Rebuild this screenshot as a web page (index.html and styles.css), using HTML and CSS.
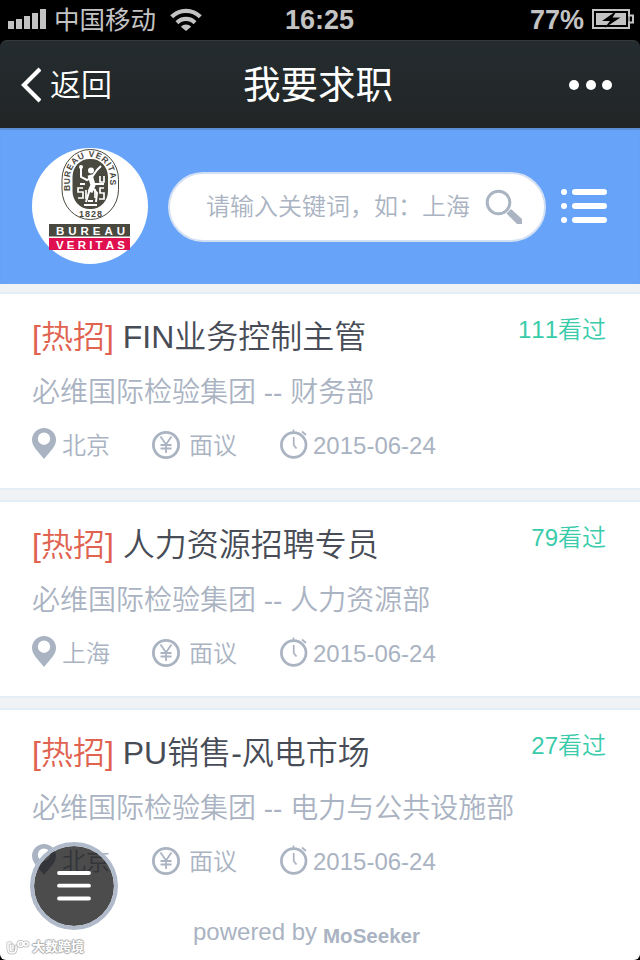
FILE: index.html
```html
<!DOCTYPE html>
<html lang="zh-CN">

<head>
    <meta charset="UTF-8">
    <meta name="viewport" content="width=device-width, initial-scale=1.0">
    <title>我要求职</title>
    <link rel="stylesheet" href="styles.css">
</head>

<body>
    <!-- shared icons -->
    <svg class="icon-defs">
        <symbol id="icon-pin" viewBox="0 0 24 31">
            <path fill-rule="evenodd" d="M12 0a12 12 0 0 1 12 12c0 4-2 6.500-4 9.500L12 31 4 21.500C2 18.500 0 16 0 12A12 12 0 0 1 12 0zm0 4.500a6.200 6.200 0 1 0 0 12.400 6.200 6.200 0 0 0 0-12.400z" fill="currentColor" />
        </symbol>
        <symbol id="icon-yen" viewBox="0 0 28 28">
            <g fill="none" stroke="currentColor">
                <circle cx="14" cy="14" r="12.600" stroke-width="2.800" />
                <path d="M8.500 5.500L14 13.500l5.500-8M14 13v9M8.500 14h11M8.500 17.500h11" stroke-width="1.800" />
            </g>
        </symbol>
        <symbol id="icon-clock" viewBox="0 0 28 30">
            <g fill="none" stroke="currentColor">
                <circle cx="13.700" cy="16" r="12.300" stroke-width="2.700" />
                <path d="M13.500 0.500v3M22 2.500l4 3.500M13.700 8v8l2.800 3.500" stroke-width="1.700" />
            </g>
        </symbol>
    </svg>

    <div class="status-bar">
        <div class="status-left">
            <svg class="signal" viewBox="0 0 38 20">
                <path d="M0 12h6v8H0zM8 10h6v10H8zM16 7h6v13h-6zM24 4h6v16h-6zM32 0h6v20h-6z" fill="#c3c3c3" />
            </svg>
            <span class="carrier">中国移动</span>
            <svg class="wifi" viewBox="0 0 32 23">
                <g fill="none" stroke="#c3c3c3" stroke-width="4.200">
                    <path d="M1.700 8.800a20 20 0 0 1 28.600 0" />
                    <path d="M7 14.700a12.700 12.700 0 0 1 18 0" />
                </g>
                <path d="M10.800 18.700a7.500 7.500 0 0 1 10.400 0L16 23z" fill="#c3c3c3" />
            </svg>
        </div>
        <div class="status-time">16:25</div>
        <div class="status-right">
            <span>77%</span>
            <svg class="battery" viewBox="0 0 42 20">
                <path d="M1 1h36v5.500h4v7h-4V19H1z" fill="none" stroke="#c3c3c3" stroke-width="2" />
                <path d="M37 6v8" stroke="#c3c3c3" stroke-width="1.500" />
                <path d="M4 4h30v12H4z" fill="#c3c3c3" />
                <path d="M25 1.500L10 12h8l-5.500 7L28.500 8.500h-8z" fill="#000" />
            </svg>
        </div>
    </div>

    <div class="nav-bar">
        <div class="back">
            <svg class="back-arrow" viewBox="0 0 20 36">
                <path d="M19 2L3 18l16 16" fill="none" stroke="#fff" stroke-width="4.200" />
            </svg>
            <span>返回</span>
        </div>
        <h1>我要求职</h1>
        <div class="more"><i></i><i></i><i></i></div>
    </div>

    <div class="search-header">
        <svg class="logo" viewBox="0 0 116 116">
            <defs>
                <path id="seal-top" d="M38 43V31a20.200 22 0 0 1 40.400 0v12" />
            </defs>
            <circle cx="58" cy="58" r="58" fill="#fff" />
            <rect x="30" y="1.500" width="56.500" height="70" rx="28.200" ry="30" fill="#fff" stroke="#4a493f" />
            <rect x="40.500" y="11" width="35.500" height="50" rx="17" ry="18" fill="#4a493f" />
            <text class="seal-text"><textPath href="#seal-top" textLength="84">BUREAU VERITAS</textPath></text>
            <text class="seal-text seal-year" x="47" y="69" textLength="23">1828</text>
            <!-- figure inside the seal -->
            <g fill="none" stroke="#fff">
                <path d="M49 20v9l6 3 5-3 5-7 4-4M59 29l2 9-4 6-3 10M60 39l5 6-1 9M48 36h5M62 36h10M52 57h13M56 53h5" stroke-width="2" />
                <path d="M58 27l3 10-3 7" stroke-width="5" />
                <path d="M51 40h-5v4h5v6h-5M54 42v9M63 41v9M72 40h-4v5h4v6h-5M68 28v6h4v-6" stroke-width="1.700" />
            </g>
            <circle cx="59" cy="22.500" r="3" fill="#fff" />
            <circle cx="49" cy="19" r="2" fill="#fff" />
            <path d="M17 76h81v12.500H17z" fill="#4a493f" />
            <path d="M17 90h81v12H17z" fill="#df0f50" />
            <text class="logo-text" x="24" y="86.500" textLength="69">BUREAU</text>
            <text class="logo-text" x="24" y="100.500" textLength="69">VERITAS</text>
        </svg>
        <div class="search-box">
            <span>请输入关键词，如：上海</span>
            <svg class="search-icon" viewBox="0 0 38 36">
                <circle cx="13.500" cy="13.500" r="11.300" fill="none" stroke="#aab4c3" stroke-width="3" />
                <path d="M21.500 24.500l4.500-4.500 11 10v5h-5z" fill="#aab4c3" />
            </svg>
        </div>
        <svg class="list-icon" viewBox="0 0 46 36">
            <g stroke="#fff" stroke-width="6" stroke-linecap="round">
                <path d="M3 4h.1M3 18h.1M3 32h.1M14 4h29M14 18h29M14 32h29" />
            </g>
        </svg>
    </div>

    <div class="job-list">
        <div class="job">
            <div class="job-head">
                <h2><em>[热招]</em> FIN业务控制主管</h2>
                <span class="views">111看过</span>
            </div>
            <p class="dept">必维国际检验集团 -- 财务部</p>
            <div class="meta">
                <span class="place"><svg class="pin"><use href="#icon-pin" /></svg>北京</span>
                <span class="pay"><svg class="yen"><use href="#icon-yen" /></svg>面议</span>
                <span class="date"><svg class="clock"><use href="#icon-clock" /></svg>2015-06-24</span>
            </div>
        </div>
        <div class="job">
            <div class="job-head">
                <h2><em>[热招]</em> 人力资源招聘专员</h2>
                <span class="views">79看过</span>
            </div>
            <p class="dept">必维国际检验集团 -- 人力资源部</p>
            <div class="meta">
                <span class="place"><svg class="pin"><use href="#icon-pin" /></svg>上海</span>
                <span class="pay"><svg class="yen"><use href="#icon-yen" /></svg>面议</span>
                <span class="date"><svg class="clock"><use href="#icon-clock" /></svg>2015-06-24</span>
            </div>
        </div>
        <div class="job">
            <div class="job-head">
                <h2><em>[热招]</em> PU销售-风电市场</h2>
                <span class="views">27看过</span>
            </div>
            <p class="dept">必维国际检验集团 -- 电力与公共设施部</p>
            <div class="meta">
                <span class="place"><svg class="pin"><use href="#icon-pin" /></svg>北京</span>
                <span class="pay"><svg class="yen"><use href="#icon-yen" /></svg>面议</span>
                <span class="date"><svg class="clock"><use href="#icon-clock" /></svg>2015-06-24</span>
            </div>
        </div>
    </div>

    <div class="footer">
        <span>powered by</span>
        <svg class="brand" viewBox="0 0 104 28">
            <text x="2" y="20.500" textLength="97" lengthAdjust="spacingAndGlyphs">MoSeeker</text>
        </svg>
    </div>

    <!-- floating menu button -->
    <div class="menu-btn">
        <svg viewBox="0 0 34 30">
            <path d="M2 2h30M2 14.700h30M2 27.500h30" stroke="#fff" stroke-width="3.800" stroke-linecap="round" />
        </svg>
    </div>

    <div class="watermark">
        <svg viewBox="0 0 24 15">
            <g fill="none" stroke-linecap="round">
                <path d="M2 3v6q0 4 4 4t4-4V6M2 3h3M7 5v4M12 4a2.500 2.500 0 1 0 5 0 2.500 2.500 0 1 0-5 0M18 4a2 2 0 1 0 4 0 2 2 0 1 0-4 0" stroke="#bbb" stroke-width="3" />
                <path d="M2 3v6q0 4 4 4t4-4V6M2 3h3M7 5v4M12 4a2.500 2.500 0 1 0 5 0 2.500 2.500 0 1 0-5 0M18 4a2 2 0 1 0 4 0 2 2 0 1 0-4 0" stroke="#fff" stroke-width="1.500" />
            </g>
        </svg>
        <span>大数跨境</span>
    </div>
</body>

</html>
```

FILE: styles.css
```css
* {
    box-sizing: border-box;
    margin: 0;
    padding: 0;
}

html {
    background-color: #000;
}

body {
    position: relative;
    width: 640px;
    height: 960px;
    overflow: hidden;
    background-color: #000;
    font-family: "Liberation Sans", "Noto Sans CJK SC", sans-serif;
    font-weight: 350;
    font-kerning: none;
    color: #aab3c2;
}

svg {
    display: block;
    flex-shrink: 0;
}

.icon-defs {
    display: none;
}

/* Status bar */
.status-bar {
    height: 40px;
    padding: 0 6px 0 8px;
    display: grid;
    grid-template-columns: 1fr auto 1fr;
    align-items: center;
    color: #c3c3c3;
    font-size: 27px;
    font-weight: bold;
    line-height: 40px;
}

.status-left,
.status-right {
    display: flex;
    align-items: center;
}

.status-time {
    margin-right: 3px;
}

.status-right {
    justify-content: flex-end;
    gap: 8px;
}

.signal {
    width: 38px;
    height: 20px;
    margin: 0 8px 2px 0;
}

.carrier {
    font-size: 25.500px;
    font-weight: normal;
}

.wifi {
    width: 32px;
    height: 23px;
    margin: 0 0 1px 14px;
}

.battery {
    width: 42px;
    height: 20px;
    margin-bottom: 2px;
}

/* Navigation bar */
.nav-bar {
    height: 88px;
    padding: 0 28px 0 21px;
    display: grid;
    grid-template-columns: 1fr auto 1fr;
    align-items: center;
    background: linear-gradient(#242c2f, #222526);
    border-top: 1px solid #34393b;
    border-radius: 7px 7px 0 0;
    color: #fff;
}

.back {
    display: flex;
    align-items: center;
    gap: 9px;
    font-size: 31px;
}

.back span {
    padding-bottom: 5px;
}

.back-arrow {
    width: 20px;
    height: 36px;
}

.nav-bar h1 {
    padding: 0 0 7px 3px;
    font-size: 37.500px;
    font-weight: normal;
}

.more {
    display: flex;
    justify-content: flex-end;
    gap: 6.500px;
}

.more i {
    width: 10px;
    height: 10px;
    border-radius: 50%;
    background-color: #fff;
}

/* Search */
.search-header {
    height: 156px;
    padding: 0 33px 0 32px;
    display: flex;
    align-items: center;
    background-color: #66a3f9;
    box-shadow: inset 0 2px 1px #5a8ed4;
}

.logo {
    width: 116px;
    height: 116px;
}

.seal-text {
    font-size: 8.500px;
    font-weight: bold;
    fill: #4a493f;
}

.seal-year {
    font-size: 9px;
}

.logo-text {
    font-size: 11.500px;
    font-weight: bold;
    fill: #fff;
}

.search-box {
    width: 378px;
    height: 70px;
    margin: 2px 15px 0 20px;
    padding: 0 21px 0 36px;
    display: flex;
    align-items: center;
    justify-content: space-between;
    background-color: #fff;
    border: 2px solid #d3e0f3;
    border-radius: 35px;
    font-size: 24px;
    white-space: nowrap;
}

.search-box span {
    padding-bottom: 5px;
}

.search-icon {
    width: 38px;
    height: 36px;
    margin-bottom: 1px;
}

.list-icon {
    width: 46px;
    height: 36px;
    margin-bottom: 1px;
}

/* Job list */
.job-list {
    padding-top: 8px;
    display: flex;
    flex-direction: column;
    gap: 10px;
    background-color: #eff3f6;
}

.job {
    height: 198px;
    padding: 21px 34px 0 32px;
    background-color: #fff;
    border-top: 2px solid #e3eef6;
    border-bottom: 2px solid #e3eef6;
}

.job:last-child {
    border-bottom-color: #fff;
}

.job-head {
    display: flex;
    justify-content: space-between;
}

.job h2 {
    font-size: 32px;
    font-weight: 350;
    line-height: 44px;
    color: #474c56;
}

.job h2 em {
    font-style: normal;
    color: #df6350;
}

.views {
    font-size: 24px;
    line-height: 30px;
    color: #3accaa;
}

.dept {
    margin-top: 14px;
    font-size: 28px;
    line-height: 40px;
}

.meta {
    margin-top: 15px;
    display: flex;
    font-size: 24px;
    line-height: 34px;
}

.meta span {
    display: flex;
    align-items: center;
}

.place {
    width: 120px;
}

.pay {
    width: 128px;
}

.pin {
    width: 24px;
    height: 31px;
    margin: 0 6px 5px 0;
}

.yen {
    width: 28px;
    height: 28px;
    margin: 0 9px 3px 0;
}

.clock {
    width: 28px;
    height: 30px;
    margin: 0 5px 4px 0;
}

/* Footer */
.footer {
    height: 54px;
    padding-left: 193px;
    display: flex;
    align-items: flex-start;
    gap: 4px;
    background-color: #fff;
    border-radius: 0 0 6px 6px;
    font-size: 24px;
    line-height: 52px;
}

.footer span {
    width: 124px;
    white-space: nowrap;
}

.brand {
    width: 104px;
    height: 28px;
    margin-top: 16px;
    font-size: 21px;
    line-height: normal;
    font-weight: bold;
    fill: #aab3c2;
}

/* Overlays */
.menu-btn {
    position: absolute;
    left: 30px;
    top: 842px;
    width: 88px;
    height: 88px;
    display: flex;
    align-items: center;
    justify-content: center;
    background-color: rgba(0, 0, 0, 0.7);
    background-clip: padding-box;
    border: 4px solid #b0bacb;
    border-radius: 50%;
}

.menu-btn svg {
    width: 34px;
    height: 30px;
}

.watermark {
    position: absolute;
    left: 6px;
    top: 937px;
    display: flex;
    align-items: center;
    gap: 2px;
    font-size: 13px;
    font-weight: bold;
    line-height: 20px;
    color: #fff;
    text-shadow: 1px 0 1px #aaa, -1px 0 1px #aaa, 0 1px 1px #aaa, 0 -1px 1px #aaa;
}

.watermark svg {
    width: 24px;
    height: 15px;
}
```
